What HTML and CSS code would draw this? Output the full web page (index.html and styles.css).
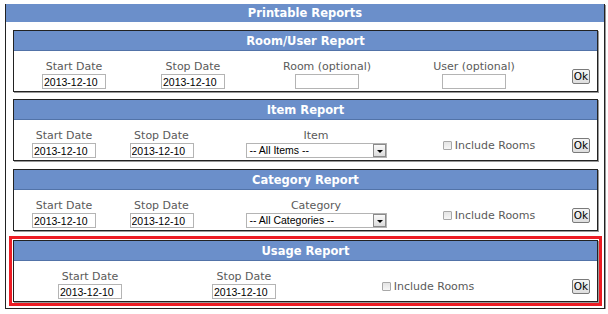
FILE: index.html
```html
<!DOCTYPE html>
<html>

<head>
    <link rel="stylesheet" href="styles.css">
</head>

<body>
    <div class="reports">
        <div class="title">Printable Reports</div>

        <div class="report">
            <div class="heading">Room/User Report</div>
            <div class="row row_room">
                <div class="field">
                    <span class="label">Start Date</span>
                    <input class="date" type="text" value="2013-12-10">
                </div>
                <div class="field">
                    <span class="label">Stop Date</span>
                    <input class="date" type="text" value="2013-12-10">
                </div>
                <div class="field">
                    <span class="label">Room (optional)</span>
                    <input class="date" type="text" value="">
                </div>
                <div class="field">
                    <span class="label">User (optional)</span>
                    <input class="date" type="text" value="">
                </div>
                <div class="ok_cell"><button class="ok">Ok</button></div>
            </div>
        </div>

        <div class="report">
            <div class="heading">Item Report</div>
            <div class="row row_item">
                <div class="field">
                    <span class="label">Start Date</span>
                    <input class="date" type="text" value="2013-12-10">
                </div>
                <div class="field">
                    <span class="label">Stop Date</span>
                    <input class="date" type="text" value="2013-12-10">
                </div>
                <div class="field">
                    <span class="label">Item</span>
                    <div class="select">-- All Items --<span class="arrow"></span></div>
                </div>
                <div class="check"><span class="box"></span>Include Rooms</div>
                <div class="ok_cell"><button class="ok">Ok</button></div>
            </div>
        </div>

        <div class="report report_category">
            <div class="heading">Category Report</div>
            <div class="row row_category">
                <div class="field">
                    <span class="label">Start Date</span>
                    <input class="date" type="text" value="2013-12-10">
                </div>
                <div class="field">
                    <span class="label">Stop Date</span>
                    <input class="date" type="text" value="2013-12-10">
                </div>
                <div class="field">
                    <span class="label">Category</span>
                    <div class="select">-- All Categories --<span class="arrow"></span></div>
                </div>
                <div class="check"><span class="box"></span>Include Rooms</div>
                <div class="ok_cell"><button class="ok">Ok</button></div>
            </div>
        </div>

        <div class="report report_marked">
            <div class="heading">Usage Report</div>
            <div class="row row_usage">
                <div class="field">
                    <span class="label">Start Date</span>
                    <input class="date" type="text" value="2013-12-10">
                </div>
                <div class="field">
                    <span class="label">Stop Date</span>
                    <input class="date" type="text" value="2013-12-10">
                </div>
                <div class="check"><span class="box"></span>Include Rooms</div>
                <div class="ok_cell"><button class="ok">Ok</button></div>
            </div>
        </div>
    </div>
</body>

</html>
```

FILE: styles.css
```css
/* Page */

body {
    margin: 0;
    padding: 4px 0 0 5px;
    background-color: #fff;
    font-family: "DejaVu Sans", Verdana, sans-serif;
    font-size: 11px;
}

/* The outer frame */

.reports {
    width: 598px;
    border: 1px solid #222;
    border-top: none;
    box-shadow: 1px 1px 0 #999;
    padding-bottom: 6px;
}

.title {
    height: 18px;
    line-height: 19px;
    background-color: #6b8fca;
    color: #fff;
    font-weight: bold;
    font-size: 11.5px;
    text-align: center;
    margin-bottom: 8px;
}

/* One report box */

.report {
    margin: 0 6px 7px 7px;
    border: 1px solid #222;
    box-shadow: 1px 1px 0 #999;
}

.report_category {
    margin-top: 8px;
}

.report_marked {
    margin-top: 9px;
    margin-bottom: 0;
    outline: 3px solid #ed1c24;
    outline-offset: 1px;
}

.heading {
    height: 19px;
    line-height: 21px;
    background-color: #6b8fca;
    border-bottom: 1px solid #5273a8;
    color: #fff;
    font-weight: bold;
    font-size: 11.5px;
    text-align: center;
}

/* Form row */

.row {
    display: grid;
    align-items: end;
    padding: 9px 0 2px 0;
}

.row_room {
    grid-template-columns: 120px 118px 150px 144px 1fr;
}

.row_item,
.row_category {
    grid-template-columns: 100px 95px 214px 132px 1fr;
}

.row_usage {
    grid-template-columns: 152px 156px 212px 1fr;
}

.field {
    display: flex;
    flex-direction: column;
    align-items: center;
}

.label {
    color: #5a5a5a;
    line-height: 14px;
}

.date {
    box-sizing: border-box;
    width: 64px;
    height: 15px;
    margin: 0;
    padding: 0 1px;
    border: 1px solid #b4b4b4;
    font-family: "Liberation Sans", Arial, sans-serif;
    font-size: 10.5px;
    color: #000;
}

/* Fake drop-down */

.select {
    box-sizing: border-box;
    position: relative;
    width: 141px;
    height: 15px;
    line-height: 13px;
    padding-left: 3px;
    border: 1px solid #b4b4b4;
    font-family: "Liberation Sans", Arial, sans-serif;
    font-size: 10.5px;
    color: #000;
    text-align: left;
}

.arrow {
    position: absolute;
    right: 0;
    top: 0;
    width: 13px;
    height: 13px;
    box-sizing: border-box;
    border: 1px solid #8a8a8a;
    background: linear-gradient(#fafafa, #dcdcdc);
}

.arrow:after {
    content: "";
    position: absolute;
    left: 3px;
    top: 5px;
    border-left: 3px solid transparent;
    border-right: 3px solid transparent;
    border-top: 3px solid #000;
}

/* Checkbox */

.check {
    align-self: center;
    padding-top: 4px;
    text-align: center;
    color: #5a5a5a;
    white-space: nowrap;
}

.box {
    display: inline-block;
    width: 7px;
    height: 7px;
    margin-right: 3px;
    border: 1px solid #a8a8a8;
    border-radius: 1px;
    background: linear-gradient(#e4e4e4, #f6f6f6);
    vertical-align: -1px;
}

/* Ok button */

.ok_cell {
    align-self: center;
    padding-top: 3px;
    text-align: right;
    padding-right: 7px;
}

.ok {
    height: 15px;
    padding: 0 1px;
    margin: 0;
    border: 1px solid #7a7a7a;
    border-radius: 2px;
    background: linear-gradient(#f6f6f6, #dedede);
    font-family: "DejaVu Sans", Verdana, sans-serif;
    font-size: 10.5px;
    line-height: 12px;
    color: #000;
}
```
